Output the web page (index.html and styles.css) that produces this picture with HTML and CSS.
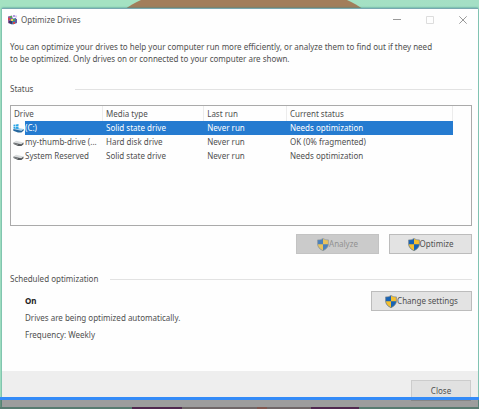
FILE: index.html
```html
<!DOCTYPE html>
<html lang="en">
<head>
<meta charset="utf-8">
<title>Optimize Drives</title>
<link rel="stylesheet" href="styles.css">
</head>
<body>
<svg class="defs" width="0" height="0" aria-hidden="true">
  <symbol id="shield" viewBox="0 0 12 13">
    <path d="M6 .4C4.500 1.500 2.600 2 .6 1.900V6c0 3 2.200 5.200 5.400 6.700V.4z" fill="#1763b5"/>
    <path d="M6 .4c1.500 1.100 3.400 1.600 5.400 1.500V6c0 3-2.200 5.200-5.400 6.700V.4z" fill="#f5c02f"/>
    <path d="M6 6.300H.6C.7 9.200 2.900 11.300 6 12.700z" fill="#f5c02f"/>
    <path d="M6 6.300h5.400C11.300 9.200 9.100 11.300 6 12.700z" fill="#1763b5"/>
    <path d="M6 .4C4.500 1.500 2.600 2 .6 1.900V6c0 3 2.200 5.200 5.400 6.700C9.200 11.200 11.400 9 11.400 6V1.900C9.400 2 7.500 1.500 6 .4z" fill="none" stroke="#75828c" stroke-width=".7"/>
  </symbol>
  <symbol id="disk" viewBox="0 0 11 9">
    <path d="M.5 4.500 3 2.800l7.500 1.700-2.300 1.800z" fill="#d9dcdd"/>
    <path d="M.5 4.500 8.200 6.300l2.300-1.800v1.700L8.400 8H5L.5 6z" fill="#55595c"/>
    <path d="M1 5.500 5 6.600" stroke="#a9adaf" stroke-width=".6"/>
  </symbol>
  <symbol id="system-disk" viewBox="0 0 11 9">
    <path d="M.3 5 3 3.500l7.700 1.600-2.300 1.700z" fill="#a8d2ef"/>
    <path d="M.3 5 8.400 6.800l2.300-1.700v1.500L8.400 8.400H5L.3 6.700z" fill="#24669e"/>
    <path d="M.5.8 2.500.5v2H.5zM3 .4 5.500 0v2.500H3zM.5 3h2v1.800l-2-.2zM3 3h2.500v2L3 4.800z" fill="#28a4e5"/>
  </symbol>
</svg>

<div class="desktop">
  <div class="hill"></div>
  <main class="window">
    <header class="titlebar">
      <svg class="app-icon" viewBox="0 0 11 11" aria-hidden="true">
        <path d="M1 2.500 5 1.500l1 4-1 5-4-1.500z" fill="#8d5c9b"/>
        <path d="M4 5l5-1 1 5-4 1.500-3-1z" fill="#3e76a6"/>
        <path d="M1 4h2v2H1zM6 8h2v2H6z" fill="#d3434b"/>
        <path d="M3 2h2v2H3zM6 5h2v2H6z" fill="#51a25b"/>
        <path d="M4 5h2v2H4z" fill="#f0d75c"/>
        <path d="M2 7h3v3L2 9z" fill="#3a3569"/>
        <path d="M6 1h2v2H6z" fill="#b09be0"/>
        <path d="M8 1.500h2v2H8z" fill="#d5c5f0"/>
        <path d="M8.500 5h1.500v4H8.500z" fill="#7450a0"/>
      </svg>
      <h1 class="title">Optimize Drives</h1>
      <div class="window-controls">
        <button class="control" aria-label="Minimize"><svg viewBox="0 0 8 8"><path d="M0 3.500h8"/></svg></button>
        <button class="control" aria-label="Maximize" disabled><svg viewBox="0 0 8 8"><path d="M.5.5h7v7h-7z"/></svg></button>
        <button class="control" aria-label="Close window"><svg viewBox="0 0 8 8"><path d="M.3.3l7.400 7.400M7.700.3.3 7.700"/></svg></button>
      </div>
    </header>

    <div class="content">
      <p class="intro">You can optimize your drives to help your computer run more efficiently, or analyze them to find out if they need<br>to be optimized. Only drives on or connected to your computer are shown.</p>

      <h2 class="section status-heading">Status</h2>
      <div class="drive-list">
        <table>
          <thead>
            <tr><th class="col-drive">Drive</th><th class="col-media">Media type</th><th class="col-run">Last run</th><th class="col-status">Current status</th><th class="col-rest"></th></tr>
          </thead>
          <tbody>
            <tr class="selected"><td><span class="drive"><svg><use href="#system-disk"/></svg><span class="name">(C:)</span></span></td><td>Solid state drive</td><td>Never run</td><td>Needs optimization</td><td></td></tr>
            <tr><td><span class="drive"><svg><use href="#disk"/></svg><span class="name">my-thumb-drive (...</span></span></td><td>Hard disk drive</td><td>Never run</td><td>OK (0% fragmented)</td><td></td></tr>
            <tr><td><span class="drive"><svg><use href="#disk"/></svg><span class="name">System Reserved</span></span></td><td>Solid state drive</td><td>Never run</td><td>Needs optimization</td><td></td></tr>
          </tbody>
        </table>
      </div>
      <div class="actions">
        <button class="button" disabled><svg class="shield"><use href="#shield"/></svg>Analyze</button>
        <button class="button"><svg class="shield"><use href="#shield"/></svg>Optimize</button>
      </div>

      <h2 class="section">Scheduled optimization</h2>
      <div class="schedule">
        <div class="schedule-text">
          <p class="state">On</p>
          <p>Drives are being optimized automatically.</p>
          <p>Frequency: Weekly</p>
        </div>
        <button class="button wide"><svg class="shield"><use href="#shield"/></svg>Change settings</button>
      </div>
    </div>

    <footer class="footer"><button class="button close">Close</button></footer>
  </main>
  <div class="progress"></div>
</div>
</body>
</html>
```

FILE: styles.css
```css
* { box-sizing: border-box; }

body {
  margin: 0;
  font: 8px/12px "Noto Sans", "Open Sans", sans-serif;
  color: #505050;
}

h1, h2, p { margin: 0; font-size: inherit; font-weight: 400; }
button { font: inherit; color: inherit; }
.defs { position: absolute; }

.desktop {
  position: relative;
  display: flex;
  min-height: 100vh;
  padding: 8px 1px 2px 2px;
  overflow: hidden;
  background: linear-gradient(90deg, #a4e2c2 50%, #a4dfc5);
}

.desktop::after {
  content: "";
  position: absolute;
  inset: auto 0 0;
  height: 2px;
  background: linear-gradient(90deg, #587b70 132px, #50284f 132px 182px, #6f6768 182px 257px, #805750 257px 267px, #6f6768 267px 311px, #50284f 311px 359px, #587b70 359px);
}

.hill {
  position: absolute;
  top: -18px;
  left: 23%;
  width: 56%;
  height: 100px;
  border-radius: 50%;
  background: #a27e5b;
}

.window {
  position: relative;
  display: flex;
  flex: 1;
  flex-direction: column;
  border-top: 1px solid #78a8b0;
  background: #fefefe;
  box-shadow: 0 0 2px #39888c;
}

.titlebar { display: flex; align-items: center; height: 21px; padding: 0 11px 0 5px; }
.app-icon { width: 11px; height: 11px; margin-right: 3px; }
.title { font-size: 8px; color: #555; }
.window-controls { display: flex; gap: 25px; margin-left: auto; }
.control { display: flex; width: 8px; height: 8px; padding: 0; border: 0; background: none; }
.control svg { width: 8px; height: 8px; fill: none; stroke: #999; stroke-width: 1; }
.control:disabled svg { stroke: #ddd; }

.content { flex: 1; padding: 11px 6px 0 8px; }
.intro { margin-bottom: 18px; }

.section { display: flex; align-items: center; gap: 12px; }
.section::after { content: ""; flex: 1; height: 1px; background: #e2e2e2; }
.status-heading { gap: 42px; margin-bottom: 10px; }

.drive-list { height: 121px; border: 1px solid #aaa; }
table { width: 100%; table-layout: fixed; border-collapse: separate; border-spacing: 0; }
th, td { height: 14px; padding: 0 3px; font-weight: 400; line-height: 14px; text-align: left; white-space: nowrap; }
th { height: 15px; border-right: 1px solid #ececec; }
td:first-child { padding: 0; }
.col-drive { width: 20%; }
.col-media { width: 22%; }
.col-run { width: 18%; }
.col-status { width: 36%; }
.col-rest { width: 4%; border: 0; }
.drive { display: flex; align-items: center; }
.drive svg { width: 11px; height: 9px; margin: 0 1px 0 2px; }
.name { flex: 1; }
.selected { color: #fff; }
.selected td:not(:first-child):not(:last-child), .selected .name { background: #257bd0; }

.actions { display: flex; justify-content: flex-end; gap: 10px; margin: 8px 0 19px; }
.button {
  display: flex;
  align-items: center;
  justify-content: center;
  width: 83px;
  height: 20px;
  padding: 0;
  border: 1px solid #bcbcbc;
  background: #e3e3e3;
}
.button:disabled { border-color: #c3c3c3; background: #cbcbcb; color: #929292; }
.button:disabled .shield { opacity: .7; }
.shield { width: 12px; height: 13px; }
.wide { width: 101px; }

.schedule { display: flex; justify-content: space-between; align-items: flex-start; padding-top: 6px; }
.schedule-text { display: grid; gap: 5px; padding: 4px 0 0 15px; }
.state { font-weight: 700; color: #222; }

.footer { display: flex; justify-content: flex-end; height: 36px; padding: 9px 7px 0; background: #eee; }
.close { width: 60px; height: 21px; border-color: #ccc; background: #e1e1e1; }

.progress {
  position: absolute;
  inset: auto 0 0;
  height: 12px;
  border-top: 3px solid #348bf8;
  background: rgba(0, 0, 0, .34);
}
```
